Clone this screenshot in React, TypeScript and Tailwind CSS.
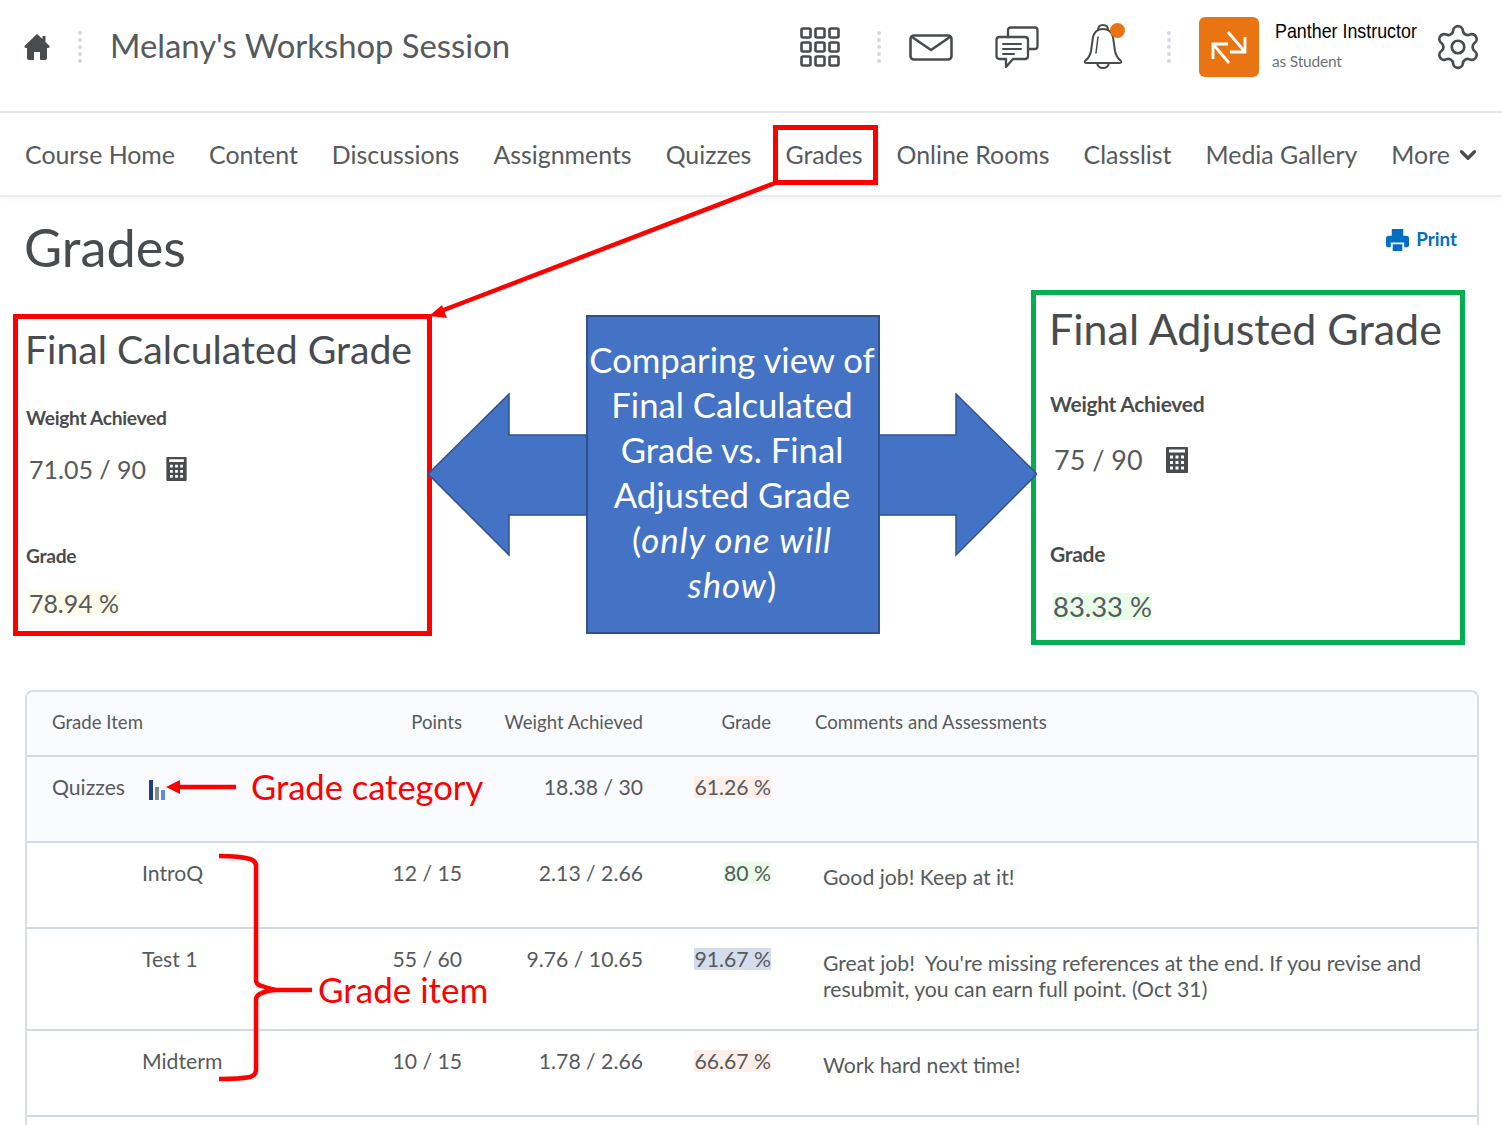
import React from "react";
import { Settings, ChevronDown } from "lucide-react";

const navItems = [
  "Course Home",
  "Content",
  "Discussions",
  "Assignments",
  "Quizzes",
  "Grades",
  "Online Rooms",
  "Classlist",
  "Media Gallery",
];

const rows = [
  {
    name: "IntroQ",
    points: "12 / 15",
    weight: "2.13 / 2.66",
    grade: "80 %",
    tint: "bg-[#e8fce8]",
    comment: ["Good job! Keep at it!"],
    height: "h-[86px]",
  },
  {
    name: "Test 1",
    points: "55 / 60",
    weight: "9.76 / 10.65",
    grade: "91.67 %",
    tint: "bg-[#d3dded]",
    comment: [
      "Great job!  You're missing references at the end. If you revise and",
      "resubmit, you can earn full point. (Oct 31)",
    ],
    height: "h-[102px]",
  },
  {
    name: "Midterm",
    points: "10 / 15",
    weight: "1.78 / 2.66",
    grade: "66.67 %",
    tint: "bg-[#fdeee8]",
    comment: ["Work hard next time!"],
    height: "h-[86px]",
  },
];

const Dots = () => (
  <div className="flex h-[32px] w-[4px] flex-col justify-between">
    {[0, 1, 2, 3, 4].map((i) => (
      <span key={i} className="h-[4px] w-[4px] rounded-full bg-[#d3d9e3]" />
    ))}
  </div>
);

const Calculator = ({ className }: { className: string }) => (
  <svg viewBox="0 0 22 26" className={className}>
    <path fill="#494c4e" fillRule="evenodd" d="M1 0h20a1 1 0 0 1 1 1v24a1 1 0 0 1-1 1H1a1 1 0 0 1-1-1V1a1 1 0 0 1 1-1zM3 2.500v3h16v-3zM4 8.500v3h3v-3zm5.500 0v3h3v-3zm5.500 0v3h3v-3zM4 14v3h3v-3zm5.500 0v3h3v-3zm5.500 0v3h3v-3zM4 19.500v3h3v-3zm5.500 0v3h3v-3zm5.500 0v3h3v-3z" />
  </svg>
);

const App = () => {
  return (
    <div className="relative h-[1125px] w-[1502px] overflow-hidden bg-white font-[Lato,sans-serif] text-[#494c4e]">
      {/* top bar */}
      <header className="flex h-[113px] items-start border-b-2 border-[#e6eaf0]">
        <svg viewBox="0 0 26 26" className="ml-[24px] mt-[34px] h-[26px] w-[26px]">
          <path fill="#494c4e" d="M13 0 L18.5 5 V2 H21.500 V8 L25.500 12 Q26 14 24 14 H23 V24 Q23 26 21 26 H17 Q16 26 16 25 V18 H10 V25 Q10 26 9 26 H5 Q3 26 3 24 V14 H2 Q0 14 .5 12 Z" />
        </svg>
        <div className="ml-[28px] mt-[31px]"><Dots /></div>
        <h1 className="ml-[28px] mt-[26px] text-[32.800px] leading-[40px] text-[#565a5c]">Melany's Workshop Session</h1>

        <svg viewBox="0 0 40 40" className="ml-[290px] mt-[27px] h-[40px] w-[40px]" fill="none" stroke="#494c4e" strokeWidth="2.600">
          {[1.500, 15.500, 29.500].flatMap((y) =>
            [1.500, 15.500, 29.500].map((x) => (
              <rect key={`${x}-${y}`} x={x} y={y} width="9" height="9" rx="1.500" />
            ))
          )}
        </svg>
        <div className="ml-[37px] mt-[31px]"><Dots /></div>
        <svg viewBox="0 0 44 27" className="ml-[28px] mt-[34px] h-[27px] w-[44px]" fill="none" stroke="#494c4e" strokeWidth="2.600" strokeLinejoin="round">
          <rect x="1.500" y="1.500" width="41" height="24" rx="3.500" />
          <path d="M3 3 L22 16 L41 3" />
        </svg>
        <svg viewBox="0 0 44 43" className="ml-[42px] mt-[26px] h-[43px] w-[44px]" fill="none" stroke="#494c4e" strokeWidth="2.300" strokeLinecap="round" strokeLinejoin="round">
          <path d="M13 11 V4 Q13 1.500 16 1.500 H40 Q42.500 1.500 42.500 4 V20 Q42.500 23 40 23 H33" />
          <path d="M4.500 11 H30 Q33 11 33 14 V30 Q33 33 30 33 H18 L11 41 V33 H4.500 Q1.500 33 1.500 30 V14 Q1.500 11 4.500 11 Z" />
          <path d="M8 18 H26 M8 23 H26 M8 28 H19" strokeWidth="2" />
        </svg>
        <div className="relative ml-[44px] mt-[23px] h-[47px] w-[40px]">
          <svg viewBox="0 0 40 47" className="h-[47px] w-[40px]" fill="none" stroke="#494c4e" strokeWidth="2" strokeLinecap="round" strokeLinejoin="round">
            <path d="M15 7 Q15 2 20 2 Q25 2 25 7" />
            <path d="M20 6 Q28 6 30 14 L32 28 Q33 34 38 38 Q39 40 36 40 H4 Q1 40 2 38 Q7 34 8 28 L10 14 Q12 6 20 6 Z" />
            <path d="M15 14 L13 30" strokeWidth="1.500" />
            <path d="M14 40 Q15 45 20 45 Q25 45 26 40" />
          </svg>
          <span className="absolute left-[27px] top-0 h-[15px] w-[15px] rounded-full bg-[#e87511]" />
        </div>
        <div className="ml-[44px] mt-[31px]"><Dots /></div>
        <div className="ml-[28px] mt-[17px] flex h-[60px] w-[60px] items-center justify-center rounded-[6px] bg-[#e87511]">
          <svg viewBox="0 0 60 60" className="h-[60px] w-[60px]" fill="none" stroke="#fff" strokeWidth="2.800">
            <path d="M29 15 L46 35 M46 20 V35 H31" />
            <path d="M30 46 L14 27 M14 42 V27 H29" />
          </svg>
        </div>
        <div className="ml-[15px] mt-[17px] flex w-[150px] flex-col">
          <span className="ml-[1px] origin-left scale-x-[0.85] whitespace-nowrap font-['Liberation_Sans',sans-serif] text-[21px] leading-[28px] text-black">Panther Instructor</span>
          <span className="ml-[-2px] mt-[2px] text-[15.500px] leading-[28px] tracking-[-0.2px] text-[#6e7376]">as Student</span>
        </div>
        <Settings className="ml-[9px] mt-[22px] h-[50px] w-[50px] text-[#494c4e]" strokeWidth={1.300} />
      </header>

      {/* course nav */}
      <nav className="flex h-[84px] items-center gap-[34px] border-b-2 border-[#e9ecf1] pl-[25px] pt-[2px] text-[24.900px] text-[#565a5c] shadow-[0_3px_4px_rgba(0,0,0,0.03)]">
        {navItems.map((item) => (
          <span key={item} className="whitespace-nowrap">{item}</span>
        ))}
        <span className="flex items-center gap-[5px]">
          More
          <ChevronDown className="h-[26px] w-[26px] text-[#494c4e]" strokeWidth={3} />
        </span>
      </nav>

      {/* page title */}
      <div className="flex h-[93px] items-start justify-between pl-[24px] pr-[45px]">
        <h2 className="mt-[19px] text-[52.300px] leading-[62px] text-[#494c4e]">Grades</h2>
        <div className="mt-[28px] flex items-center gap-[7px] text-[18.800px] font-bold leading-[28px] text-[#006fbf]">
          <svg viewBox="0 0 24 24" className="h-[23px] w-[23px]" fill="#006fbf">
            <path fillRule="evenodd" d="M6 1h12v7H6zM3 8h18a3 3 0 0 1 3 3v7a2 2 0 0 1-2 2h-3v-5H5v5H2a2 2 0 0 1-2-2v-7a3 3 0 0 1 3-3zM7 17h10v7H7z" />
          </svg>
          Print
        </div>
      </div>

      {/* final grade comparison */}
      <section className="flex h-[355px] items-start">
        <div className="ml-[13px] mt-[24px] h-[322px] w-[419px] border-[5px] border-[#ff0000] pl-[8px]">
          <h3 className="ml-[-1px] mt-[5px] whitespace-nowrap text-[39.200px] leading-[50px]">Final Calculated Grade</h3>
          <p className="mt-[31px] text-[19.200px] font-bold leading-[26px] tracking-[-0.3px]">Weight Achieved</p>
          <div className="ml-[3px] mt-[23px] flex items-center text-[25px] leading-[30px] text-[#565a5c]">
            71.05 / 90
            <Calculator className="ml-[20px] h-[24px] w-[21px]" />
          </div>
          <p className="mt-[59px] text-[19.200px] font-bold leading-[26px] tracking-[-0.3px]">Grade</p>
          <span className="ml-[3px] mt-[21px] inline-block bg-[#fffbea] text-[24.900px] leading-[26px] text-[#565a5c]">78.94 %</span>
        </div>

        <div className="relative h-[355px] w-[599px]">
          <svg viewBox="0 0 609 165" className="absolute left-[-4px] top-[103px] h-[165px] w-[609px]">
            <path fill="#4472c4" stroke="#2f528f" strokeWidth="1.500" d="M0 81 L81 1 V42 H528 V1 L609 81 L528 162 V122 H81 V162 Z" />
          </svg>
          <div className="absolute left-[154px] top-[25px] flex h-[319px] w-[294px] flex-col items-center justify-center border-2 border-[#2f528f] bg-[#4472c4] pb-[6px] pr-[2px] text-center text-[34.700px] leading-[45px] text-white">
            <span>Comparing view of</span>
            <span>Final Calculated</span>
            <span>Grade vs. Final</span>
            <span>Adjusted Grade</span>
            <span>(<em className="tracking-[1px]">only one will</em></span>
            <span><em className="tracking-[1px]">show</em>)</span>
          </div>
        </div>

        <div className="h-[355px] w-[434px] border-[5px] border-[#00b050] pl-[14px]">
          <h3 className="ml-[-1px] mt-[6px] whitespace-nowrap text-[43px] leading-[55px]">Final Adjusted Grade</h3>
          <p className="mt-[34px] text-[21px] font-bold leading-[28px] tracking-[-0.3px]">Weight Achieved</p>
          <div className="ml-[4px] mt-[26px] flex items-center text-[27px] leading-[32px] text-[#565a5c]">
            75 / 90
            <Calculator className="ml-[23px] h-[28px] w-[22px]" />
          </div>
          <p className="mt-[64px] text-[21px] font-bold leading-[28px] tracking-[-0.3px]">Grade</p>
          <span className="ml-[3px] mt-[25px] inline-block bg-[#e8fce8] text-[27.400px] leading-[27px] text-[#565a5c]">83.33 %</span>
        </div>
      </section>

      {/* grades table */}
      <section className="mx-[25px] mt-[45px] w-[1454px] rounded-t-[8px] border-x-2 border-t-2 border-[#d9dee6] text-[21.200px] text-[#565a5c]">
        <div className="grid h-[65px] grid-cols-[353px_82px_181px_128px_1fr] items-center rounded-t-[8px] border-b-2 border-[#d3d9e3] bg-[#f9fbff] pb-[2px] text-[18.600px]">
          <span className="pl-[25px]">Grade Item</span>
          <span className="text-right">Points</span>
          <span className="text-right">Weight Achieved</span>
          <span className="text-right">Grade</span>
          <span className="pl-[44px]">Comments and Assessments</span>
        </div>
        <div className="grid h-[86px] grid-cols-[353px_82px_181px_128px_1fr] items-start border-b-2 border-[#d3d9e3] bg-[#f9fbff] pt-[17px] leading-[26px]">
          <span className="pl-[25px]">Quizzes</span>
          <span />
          <span className="text-right">18.38 / 30</span>
          <span className="text-right"><span className="inline-block bg-[#fdeee8] leading-[22px]">61.26 %</span></span>
          <span />
        </div>
        {rows.map((row) => (
          <div key={row.name} className={`grid ${row.height} grid-cols-[353px_82px_181px_128px_1fr] items-start border-b-2 border-[#d3d9e3] pt-[17px] leading-[26px]`}>
            <span className="pl-[115px]">{row.name}</span>
            <span className="text-right">{row.points}</span>
            <span className="text-right">{row.weight}</span>
            <span className="text-right"><span className={`inline-block ${row.tint} leading-[22px]`}>{row.grade}</span></span>
            <div className="pl-[52px] pt-[4px]">
              {row.comment.map((line) => (
                <p key={line} className="whitespace-pre">{line}</p>
              ))}
            </div>
          </div>
        ))}
        <div className="h-[20px]" />
      </section>

      {/* annotations over the screenshot */}
      <div className="absolute left-[773px] top-[125px] h-[60px] w-[105px] border-[5px] border-[#ff0000]" />
      <svg className="absolute left-0 top-0 h-[1125px] w-[1502px]" viewBox="0 0 1502 1125" fill="none">
        <path d="M775 183 L441 311" stroke="#ff0000" strokeWidth="4.500" />
        <path d="M429 316 L442 305 L447 318 Z" fill="#ff0000" />
        <path d="M236 787 H176" stroke="#ff0000" strokeWidth="4.500" />
        <path d="M166 787 L180 780 V794 Z" fill="#ff0000" />
        <path d="M219 856 Q240 856 250 859 Q256 861 256 866 V980 Q256 985 262 986 Q270 989 276 990 H312 M276 990 Q268 990 262 993 Q256 995 256 1000 V1070 Q256 1075 250 1077 Q240 1079 219 1079" stroke="#ff0000" strokeWidth="4.500" />
        <rect x="149" y="780" width="4" height="20" fill="#1f3f85" />
        <rect x="155" y="787" width="4" height="13" fill="#7f8a88" />
        <rect x="161" y="790" width="4" height="10" fill="#5b8be0" />
      </svg>
      <span className="absolute left-[251px] top-[766px] whitespace-nowrap text-[34.500px] leading-[42px] text-[#ff0000]">Grade category</span>
      <span className="absolute left-[318px] top-[975px] whitespace-nowrap text-[35px] leading-[28px] text-[#ff0000]">Grade item</span>
    </div>
  );
};

export default App;
